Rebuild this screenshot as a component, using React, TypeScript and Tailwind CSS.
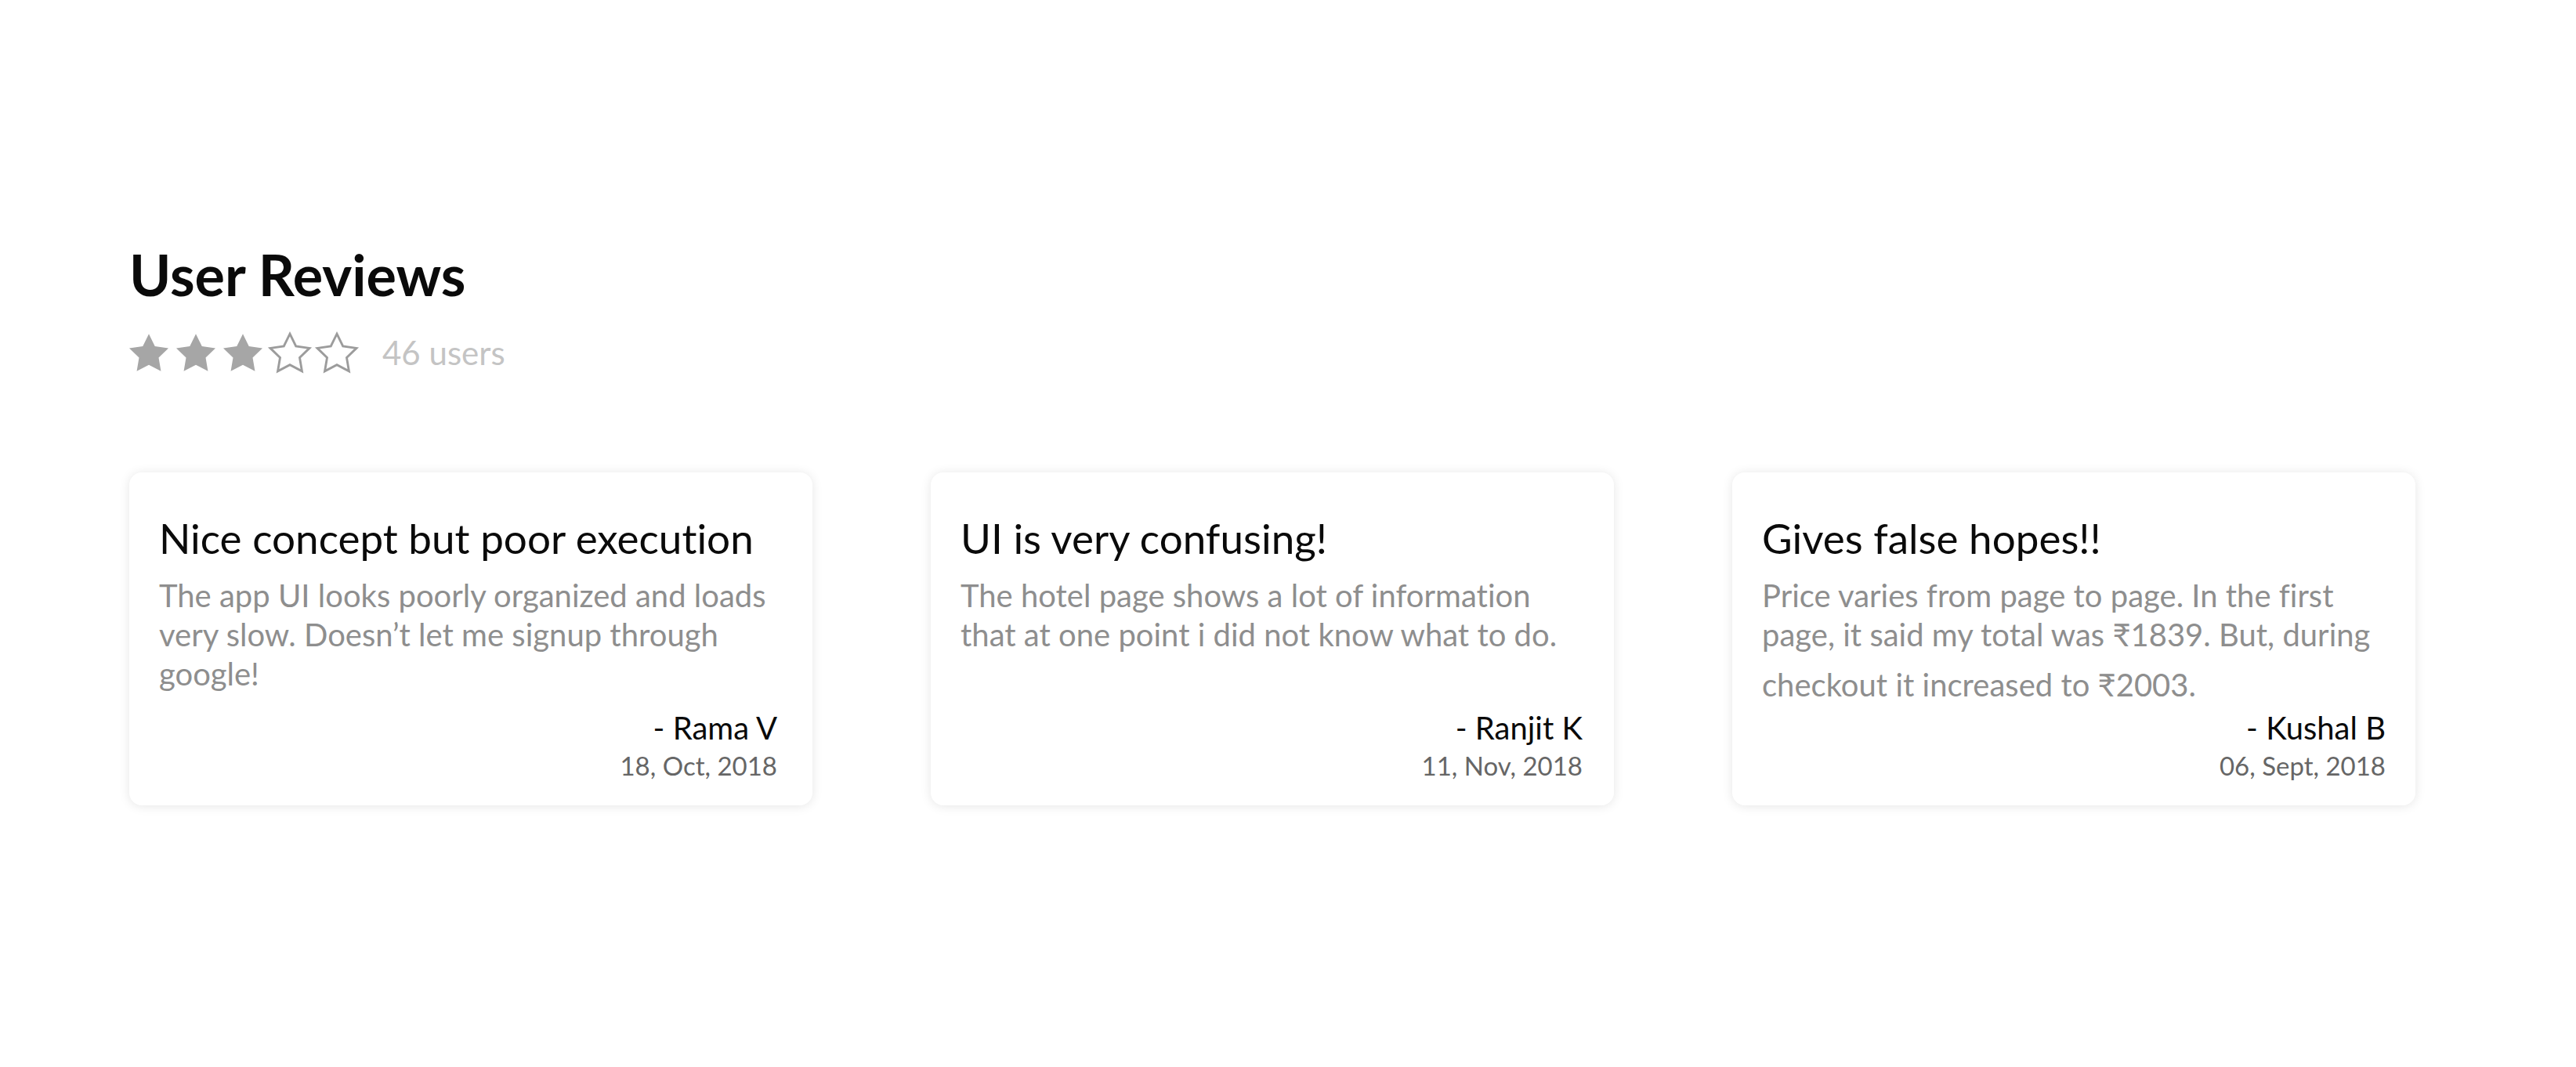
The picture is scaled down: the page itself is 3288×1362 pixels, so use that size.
import type { ReactNode } from "react";

const reviews: { title: string; body: ReactNode; author: string; date: string; signPad: string }[] = [
  {
    title: "Nice concept but poor execution",
    body: "The app UI looks poorly organized and loads very slow. Doesn’t let me signup through google!",
    author: "Rama V",
    date: "18, Oct, 2018",
    signPad: "pr-[13px]",
  },
  {
    title: "UI is very confusing!",
    body: "The hotel page shows a lot of information that at one point i did not know what to do.",
    author: "Ranjit K",
    date: "11, Nov, 2018",
    signPad: "pr-[8px]",
  },
  {
    title: "Gives false hopes!!",
    body: (
      <>
        Price varies from page to page. In the first page, it said my total was
        {/* the rupee sign sits in a taller line in the original */}
        <span className="inline-block h-[64px] w-0 align-top" /> ₹1839. But, during checkout it increased to
        ₹2003.
      </>
    ),
    author: "Kushal B",
    date: "06, Sept, 2018",
    signPad: "pr-[6px]",
  },
];

function Star({ filled }: { filled: boolean }) {
  return (
    <svg viewBox="2 2 20 19.02" className="h-[48px] w-[50px] overflow-visible" aria-hidden="true">
      <polygon
        points="12,2 15.09,8.26 22,9.27 17,14.14 18.18,21.02 12,17.77 5.82,21.02 7,14.14 2,9.27 8.91,8.26"
        fill={filled ? "#a6a6a6" : "none"}
        stroke={filled ? "none" : "#9c9c9c"}
        strokeWidth={filled ? 0 : 1.15}
      />
    </svg>
  );
}

function ReviewCard({ title, body, author, date, signPad }: (typeof reviews)[number]) {
  return (
    <div className="flex h-[425px] w-[872px] shrink-0 flex-col rounded-[16px] bg-white pt-[52px] pr-[32px] pb-[31px] pl-[38px] shadow-[0_1px_14px_rgba(0,0,0,0.1)]">
      <h3 className="text-[53px] leading-[64px] text-[#0a0a0a]">{title}</h3>
      <p className="mt-[16px] text-[40px] leading-[50px] text-[#8e8e8e]">{body}</p>
      <div className={`mt-auto text-right ${signPad}`}>
        <div className="text-[40px] leading-[48px] text-[#0a0a0a]">- {author}</div>
        <div className="mt-[4px] text-[33px] leading-[40px] text-[#666666]">{date}</div>
      </div>
    </div>
  );
}

export default function App() {
  return (
    <div className="min-h-[1362px] w-full bg-white pt-[307px] pl-[165px] font-['Lato','Open_Sans',sans-serif] [font-variant-ligatures:none]">
      <h1 className="text-[72px] leading-[86px] font-bold text-[#0a0a0a]">User Reviews</h1>

      <div className="mt-[32px] flex h-[50px] items-center">
        <div className="flex gap-[10px]">
          {[0, 1, 2, 3, 4].map((i) => (
            <Star key={i} filled={i < 3} />
          ))}
        </div>
        <span className="ml-[33px] text-[42px] leading-[50px] text-[#c4c4c4]">46 users</span>
      </div>

      <div className="mt-[128px] flex gap-[151px]">
        {reviews.map((r) => (
          <ReviewCard key={r.author} {...r} />
        ))}
      </div>
    </div>
  );
}
